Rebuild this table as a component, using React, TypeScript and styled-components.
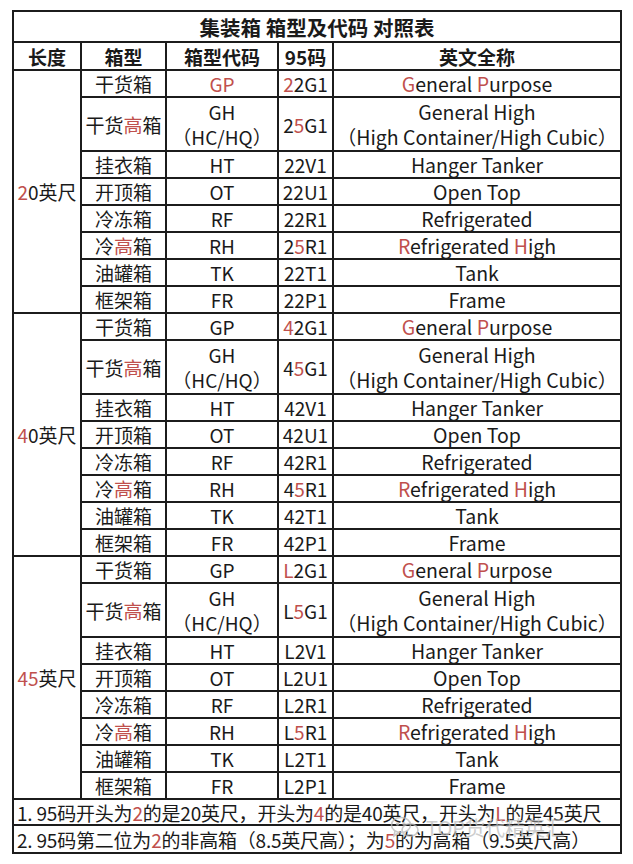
import React from 'react'
import styled, { createGlobalStyle } from 'styled-components'

const GlobalStyle = createGlobalStyle`
  html, body {
    margin: 0;
    padding: 0;
    background: #ffffff;
  }
  body {
    font-family: "Noto Sans CJK SC", "Noto Sans", sans-serif;
    color: #1a1a1a;
  }
`

const RED = '#c0504d'

// "[x]" marks the red parts of a label
const Marked: React.FC<{ text: string }> = ({ text }) => {
  const parts = text.split(/(\[[^\]]*\])/).filter(Boolean)
  return (
    <>
      {parts.map((p, i) =>
        p.startsWith('[') ? <Red key={i}>{p.slice(1, -1)}</Red> : <span key={i}>{p}</span>
      )}
    </>
  )
}

// one or more lines, split on "\n"
const Lines: React.FC<{ text: string }> = ({ text }) => (
  <>
    {text.split('\n').map((l, i) => (
      <Line key={i}>
        <Marked text={l} />
      </Line>
    ))}
  </>
)

interface Row {
  type: string
  code: string
  code95: string
  english: string
  tall?: boolean
}

const buildRows = (p: string, gpRed: boolean): Row[] => [
  { type: '干货箱', code: gpRed ? '[GP]' : 'GP', code95: `[${p}]2G1`, english: '[G]eneral [P]urpose' },
  {
    type: '干货[高]箱',
    code: 'GH\n（HC/HQ）',
    code95: `${p}[5]G1`,
    english: 'General High\n（High Container/High Cubic）',
    tall: true,
  },
  { type: '挂衣箱', code: 'HT', code95: `${p}2V1`, english: 'Hanger Tanker' },
  { type: '开顶箱', code: 'OT', code95: `${p}2U1`, english: 'Open Top' },
  { type: '冷冻箱', code: 'RF', code95: `${p}2R1`, english: 'Refrigerated' },
  { type: '冷[高]箱', code: 'RH', code95: `${p}[5]R1`, english: '[R]efrigerated [H]igh' },
  { type: '油罐箱', code: 'TK', code95: `${p}2T1`, english: 'Tank' },
  { type: '框架箱', code: 'FR', code95: `${p}2P1`, english: 'Frame' },
]

const sections = [
  { length: '[2]0英尺', rows: buildRows('2', true) },
  { length: '[4]0英尺', rows: buildRows('4', false) },
  { length: '[45]英尺', rows: buildRows('L', false) },
]

const App: React.FC = () => {
  return (
    <Page>
      <GlobalStyle />
      <Wrap>
        <Grid>
          <Title>集装箱 箱型及代码 对照表</Title>
          <Head>长度</Head>
          <Head>箱型</Head>
          <Head>箱型代码</Head>
          <Head>95码</Head>
          <Head>英文全称</Head>

          {sections.map((s, si) => (
            <React.Fragment key={si}>
              <LengthCell>
                <Marked text={s.length} />
              </LengthCell>
              {s.rows.map((r, ri) => (
                <React.Fragment key={ri}>
                  <Cell tall={r.tall}>
                    <Lines text={r.type} />
                  </Cell>
                  <Cell tall={r.tall}>
                    <Lines text={r.code} />
                  </Cell>
                  <Cell tall={r.tall}>
                    <Lines text={r.code95} />
                  </Cell>
                  <Cell tall={r.tall} latin>
                    <Lines text={r.english} />
                  </Cell>
                </React.Fragment>
              ))}
            </React.Fragment>
          ))}

          <Note h={24}>
            1. 95码开头为<Red>2</Red>的是20英尺，开头为<Red>4</Red>的是40英尺，开头为<Red>L</Red>的是45英尺
          </Note>
          <Note h={26}>
            2. 95码第二位为<Red>2</Red>的非高箱（8.5英尺高）；为<Red>5</Red>的为高箱（9.5英尺高）
          </Note>
        </Grid>

        <Watermark>
          <svg width="30" height="24" viewBox="0 0 30 24" fill="none" stroke="#b9b9b9" strokeWidth="1.6">
            <ellipse cx="11" cy="9" rx="9.5" ry="7.5" />
            <path d="M5 15 L4 20 L9 16.5" />
            <ellipse cx="20" cy="14" rx="8" ry="6.2" />
            <circle cx="7.5" cy="8" r="0.9" fill="#b9b9b9" />
            <circle cx="14" cy="8" r="0.9" fill="#b9b9b9" />
          </svg>
          <span>TOP货代精英汇</span>
        </Watermark>
      </Wrap>
    </Page>
  )
}

export default App

const Page = styled.div`
  width: 633px;
  height: 864px;
  padding-top: 10px;
  padding-left: 12px;
  box-sizing: border-box;
  background: #ffffff;
`

const Wrap = styled.div`
  position: relative;
  width: 610px;
`

const Grid = styled.div`
  display: grid;
  grid-template-columns: 66px 83px 110px 53px 286px;
  gap: 2px;
  padding: 2px;
  background: #1c1c1c;
`

const Red = styled.span`
  color: ${RED};
`

const Title = styled.div`
  grid-column: 1 / -1;
  height: 29px;
  background: #fff;
  display: flex;
  align-items: center;
  justify-content: center;
  font-size: 20.5px;
  font-weight: 700;
`

const Head = styled.div`
  height: 26px;
  background: #fff;
  display: flex;
  align-items: center;
  justify-content: center;
  font-size: 19px;
  font-weight: 700;
`

const LengthCell = styled.div`
  grid-column: 1;
  grid-row: span 8;
  background: #fff;
  display: flex;
  align-items: center;
  justify-content: center;
  font-size: 19px;
  white-space: nowrap;
`

const Cell = styled.div<{ tall?: boolean; latin?: boolean }>`
  height: ${({ tall }) => (tall ? '52px' : '25px')};
  background: #fff;
  display: flex;
  flex-direction: column;
  align-items: center;
  justify-content: center;
  font-size: ${({ latin }) => (latin ? '19.5px' : '19px')};
  white-space: nowrap;
`

const Line = styled.div`
  line-height: 25px;
`

const Note = styled.div<{ h: number }>`
  grid-column: 1 / -1;
  height: ${({ h }) => h}px;
  background: #fff;
  display: flex;
  align-items: center;
  padding-left: 3px;
  font-size: 19px;
  white-space: nowrap;
  letter-spacing: -0.2px;
`

const Watermark = styled.div`
  position: absolute;
  left: 378px;
  bottom: 12px;
  display: flex;
  align-items: center;
  gap: 6px;
  color: #bdbdbd;
  font-size: 20px;
  opacity: 0.75;
  pointer-events: none;
`
